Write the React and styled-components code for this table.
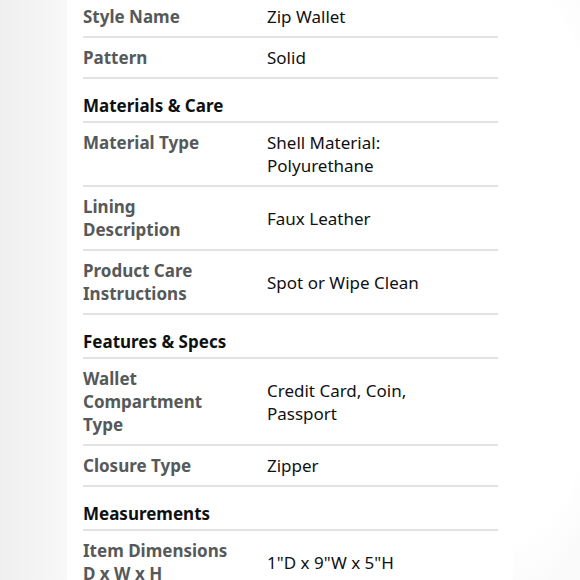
import styled, { createGlobalStyle } from "styled-components";

const GlobalStyle = createGlobalStyle`
    html, body {
        margin: 0;
        padding: 0;
        height: 100%;
    }
    body {
        font-family: "Noto Sans", "Open Sans", sans-serif;
        background: #fbfbfb;
        overflow: hidden;
    }
`;

const Page = styled.div`
    display: flex;
    width: 580px;
    height: 580px;
    overflow: hidden;
`;

const LeftGutter = styled.div`
    width: 67px;
    flex-shrink: 0;
    background: linear-gradient(to right, #efefef, #f8f8f8);
`;

const Panel = styled.div`
    width: 446px;
    flex-shrink: 0;
    background: #ffffff;
    padding: 0 15px 0 16px;
    box-sizing: border-box;
`;

const RightGutter = styled.div`
    flex: 1;
    background: radial-gradient(ellipse 120px 340px at 0% 45%, #ffffff 80%, #fafafa 100%);
`;

const Table = styled.div`
    margin-top: -3px;
    display: flex;
    flex-direction: column;
`;

const Row = styled.div`
    display: grid;
    grid-template-columns: 184px 1fr;
    padding: 8px 0;
    border-bottom: 2px solid #e3e3e3;
    font-size: 17px;
    line-height: 23px;
`;

const Label = styled.div`
    align-self: start;
    color: #565959;
    font-weight: 700;
`;

const Value = styled.div`
    align-self: center;
    color: #0f1111;
`;

const Heading = styled.div`
    padding: 15px 0 4px;
    border-bottom: 2px solid #e3e3e3;
    font-size: 17px;
    line-height: 23px;
    font-weight: 700;
    color: #0f1111;
`;

const sections = [
    { rows: [["Style Name", "Zip Wallet"], ["Pattern", "Solid"]] },
    {
        title: "Materials & Care",
        rows: [
            ["Material Type", "Shell Material:\nPolyurethane"],
            ["Lining\nDescription", "Faux Leather"],
            ["Product Care\nInstructions", "Spot or Wipe Clean"],
        ],
    },
    {
        title: "Features & Specs",
        rows: [
            ["Wallet\nCompartment\nType", "Credit Card, Coin,\nPassport"],
            ["Closure Type", "Zipper"],
        ],
    },
    {
        title: "Measurements",
        rows: [["Item Dimensions\nD x W x H", "1\"D x 9\"W x 5\"H"]],
    },
];

const Lines = ({ text }) => text.split("\n").map((t, i) => <div key={i}>{t}</div>);

export default function App() {
    return <>
        <GlobalStyle />
        <Page>
            <LeftGutter />
            <Panel>
                <Table>
                    {sections.map((s, si) => <div key={si}>
                        {s.title && <Heading>{s.title}</Heading>}
                        {s.rows.map(([k, v]) => <Row key={k}>
                            <Label><Lines text={k} /></Label>
                            <Value><Lines text={v} /></Value>
                        </Row>)}
                    </div>)}
                </Table>
            </Panel>
            <RightGutter />
        </Page>
    </>;
}
